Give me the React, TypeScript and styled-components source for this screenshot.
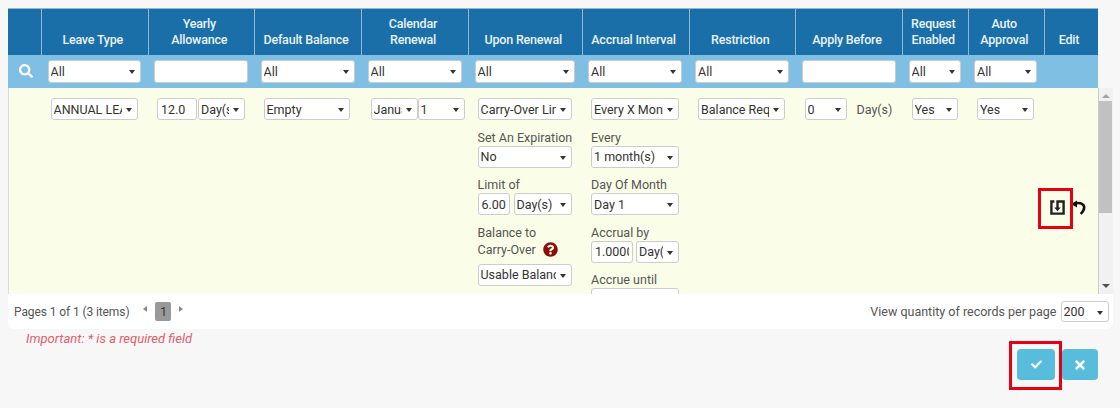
import React, { FC, ReactNode } from 'react';
import styled, { createGlobalStyle } from 'styled-components';
import { FaCheck, FaQuestionCircle, FaSearch, FaTimes } from 'react-icons/fa';

const COLUMNS = '33px 106.5px 106.5px 107px 107px 113.5px 107px 106.5px 107px 65.5px 76.5px 53px';

const GlobalStyle = createGlobalStyle`
    html, body {
        margin: 0;
        padding: 0;
        background: #f7f7f7;
    }
    body {
        font-family: Roboto, "Liberation Sans", sans-serif;
        font-size: 12.5px;
        color: #555;
    }
`;

const Page = styled.div`
    width: 1120px;
    height: 408px;
    padding: 8px 7px 0 8px;
    box-sizing: border-box;
    overflow: hidden;
`;

const Table = styled.div`
    width: 1105px;
`;

const HeaderRow = styled.div`
    display: grid;
    grid-template-columns: ${COLUMNS};
    width: 1089.5px;
    height: 46.5px;
    background: #1a6fa8;
    border-top: 1px solid #8fb9d6;
    box-sizing: border-box;
`;

const HeaderCell = styled.div`
    display: flex;
    align-items: flex-end;
    justify-content: center;
    padding: 0 4px 7px 0;
    border-left: 1px solid #8fb9d6;
    color: #e8f2f8;
    font-size: 12.5px;
    font-weight: 500;
    letter-spacing: -0.2px;
    line-height: 16px;
    text-align: center;
    box-sizing: border-box;
    &:first-child {
        border-left: none;
    }
`;

const FilterRow = styled.div`
    display: grid;
    grid-template-columns: ${COLUMNS};
    width: 1089.5px;
    height: 33.5px;
    background: #7fbfe4;
`;

const FilterCell = styled.div`
    display: flex;
    align-items: center;
    padding: 0 6.5px;
    box-sizing: border-box;
    min-width: 0;
`;

const SearchCell = styled(FilterCell)`
    justify-content: center;
    padding: 0 0 0 2px;
    color: #fff;
    font-size: 14px;
`;

const ScrollArea = styled.div`
    display: flex;
    height: 206px;
`;

const BodyViewport = styled.div`
    width: 1089.5px;
    height: 206px;
    overflow: hidden;
    background: #fafee8;
    border-left: 1px solid #ddd;
    box-sizing: border-box;
`;

const BodyRow = styled.div`
    display: grid;
    grid-template-columns: ${COLUMNS};
    margin-left: -1px;
    min-height: 238px;
`;

const BodyCell = styled.div`
    padding: 10px 0 0 9.5px;
    box-sizing: border-box;
    min-width: 0;
`;

const InlineControls = styled.div<{ $gap?: number }>`
    display: flex;
    align-items: center;
    gap: ${(p) => p.$gap ?? 1}px;
`;

const Field = styled.div`
    margin-top: 8.5px;
`;

const FieldLabel = styled.div`
    line-height: 17px;
    white-space: nowrap;
    color: #555;
`;

const HelpLabel = styled(FieldLabel)`
    margin-bottom: 6px;
`;

const HelpIcon = styled(FaQuestionCircle)`
    color: #8f0a0a;
    font-size: 15px;
    margin-left: 7px;
    vertical-align: -3px;
`;

const SelectWrap = styled.span<{ $w?: number; $h?: number }>`
    position: relative;
    display: inline-block;
    flex: none;
    width: ${(p) => (p.$w ? `${p.$w}px` : '100%')};
    height: ${(p) => p.$h ?? 22}px;
    &::after {
        content: '';
        position: absolute;
        right: 6px;
        top: 50%;
        margin-top: -1px;
        border-left: 3.5px solid transparent;
        border-right: 3.5px solid transparent;
        border-top: 4px solid #333;
        pointer-events: none;
    }
`;

const NativeSelect = styled.select`
    appearance: none;
    display: block;
    width: 100%;
    height: 100%;
    margin: 0;
    padding: 0 15px 0 2px;
    background: #fff;
    border: 1px solid #ccc;
    border-radius: 3px;
    box-sizing: border-box;
    color: #333;
    font: 12.5px Roboto, "Liberation Sans", sans-serif;
    outline: none;
`;

const TextInput = styled.input<{ $w?: number; $h?: number }>`
    flex: none;
    width: ${(p) => (p.$w ? `${p.$w}px` : '100%')};
    height: ${(p) => p.$h ?? 22}px;
    margin: 0;
    padding: 0 3px;
    background: #fff;
    border: 1px solid #ccc;
    border-radius: 3px;
    box-sizing: border-box;
    color: #333;
    font: 12.5px Roboto, "Liberation Sans", sans-serif;
    outline: none;
`;

const Suffix = styled.span`
    margin-left: 10px;
    color: #555;
`;

const EditCell = styled.div`
    display: flex;
    align-items: center;
    justify-content: center;
    gap: 6px;
    padding-right: 6px;
`;

const Annotated = styled.span<{ $box: string }>`
    position: relative;
    display: inline-flex;
    &::after {
        content: '';
        position: absolute;
        inset: ${(p) => p.$box};
        border: 3px solid #e60012;
        pointer-events: none;
    }
`;

const Scrollbar = styled.div`
    display: flex;
    flex-direction: column;
    justify-content: space-between;
    align-items: center;
    width: 15.5px;
    height: 206px;
    background: #f1f1f1;
    border-left: 1px solid #ccc;
    box-sizing: border-box;
    padding: 6px 0 6px;
`;

const ScrollThumb = styled.div`
    width: 13px;
    height: 112px;
    margin-top: 3px;
    margin-bottom: auto;
    background: #c1c1c1;
`;

const ScrollArrow = styled.div<{ $down?: boolean }>`
    border-left: 4px solid transparent;
    border-right: 4px solid transparent;
    ${(p) => (p.$down ? 'border-top: 4px solid #505050;' : 'border-bottom: 4px solid #a3a3a3;')}
`;

const Footer = styled.div`
    display: flex;
    align-items: center;
    justify-content: space-between;
    height: 35px;
    padding: 0 4.5px 0 6px;
    background: #fff;
    border-radius: 0 0 6px 6px;
    box-sizing: border-box;
`;

const Pager = styled.div`
    display: flex;
    align-items: center;
    font-size: 12px;
    letter-spacing: -0.1px;
`;

const PageArrow = styled.span<{ $next?: boolean }>`
    margin: 0 0 5px ${(p) => (p.$next ? '8px' : '14px')};
    border-top: 3.5px solid transparent;
    border-bottom: 3.5px solid transparent;
    ${(p) => (p.$next ? 'border-left: 4px solid #888;' : 'border-right: 4px solid #888;')}
`;

const PageNumber = styled.span`
    display: flex;
    align-items: center;
    justify-content: center;
    width: 16px;
    height: 19px;
    margin-left: 8px;
    background: #999;
    border-radius: 2px;
    color: #333;
`;

const PageSize = styled.div`
    display: flex;
    align-items: center;
    gap: 4px;
    font-size: 12.5px;
`;

const BottomArea = styled.div`
    position: relative;
    height: 70px;
`;

const RequiredNote = styled.div`
    padding: 2px 0 0 18px;
    color: #e0606a;
    font-size: 13px;
    font-style: italic;
    line-height: 16px;
`;

const Actions = styled.div`
    display: flex;
    justify-content: flex-end;
    gap: 7px;
    margin-top: 2px;
    padding-right: 15px;
`;

const ActionButton = styled.button<{ $w: number; $size: number }>`
    display: flex;
    align-items: center;
    justify-content: center;
    width: ${(p) => p.$w}px;
    height: 31px;
    padding: 0;
    background: #58bcdc;
    border: none;
    border-radius: 4px;
    color: #fff;
    font-size: ${(p) => p.$size}px;
`;

const Select: FC<{ w?: number; h?: number; value: string }> = ({ w, h, value }) => (
    <SelectWrap $w={w} $h={h}>
        <NativeSelect defaultValue={value}>
            <option>{value}</option>
        </NativeSelect>
    </SelectWrap>
);

const SaveIcon: FC = () => (
    <svg width="15" height="15" viewBox="0 0 15 15" fill="none" stroke="#222" strokeWidth="2.4">
        <path d="M4.4 1.5H1.4V13.6H13.6V1.5H7.5V8" />
        <path d="M4.3 7.4H10.7L7.5 11.2Z" fill="#222" stroke="none" />
    </svg>
);

const UndoIcon: FC = () => (
    <svg width="15" height="15" viewBox="0 0 15 15" fill="none">
        <path d="M0 4L6 0.4V7.6Z" fill="#111" />
        <path d="M4 3.6C9 2 13.2 3.8 13.2 7.6C13.2 10 11.8 11.8 9.8 14" stroke="#111" strokeWidth="2.6" />
    </svg>
);

const HEADERS: ReactNode[] = [
    '',
    'Leave Type',
    <>Yearly<br />Allowance</>,
    'Default Balance',
    <>Calendar<br />Renewal</>,
    'Upon Renewal',
    'Accrual Interval',
    'Restriction',
    'Apply Before',
    <>Request<br />Enabled</>,
    <>Auto<br />Approval</>,
    'Edit',
];

const App: FC = () => (
    <Page>
        <GlobalStyle />
        <Table>
            <HeaderRow>
                {HEADERS.map((header, i) => (
                    <HeaderCell key={i}>
                        <span>{header}</span>
                    </HeaderCell>
                ))}
            </HeaderRow>
            <FilterRow>
                <SearchCell>
                    <FaSearch />
                </SearchCell>
                <FilterCell><Select h={23} value="All" /></FilterCell>
                <FilterCell><TextInput $h={23} /></FilterCell>
                <FilterCell><Select h={23} value="All" /></FilterCell>
                <FilterCell><Select h={23} value="All" /></FilterCell>
                <FilterCell><Select h={23} value="All" /></FilterCell>
                <FilterCell><Select h={23} value="All" /></FilterCell>
                <FilterCell><Select h={23} value="All" /></FilterCell>
                <FilterCell><TextInput $h={23} /></FilterCell>
                <FilterCell><Select h={23} value="All" /></FilterCell>
                <FilterCell><Select w={63} h={23} value="All" /></FilterCell>
                <FilterCell />
            </FilterRow>
            <ScrollArea>
                <BodyViewport>
                    <BodyRow>
                        <div />
                        <BodyCell><Select w={87} value="ANNUAL LEAVE" /></BodyCell>
                        <BodyCell>
                            <InlineControls>
                                <TextInput $w={40} defaultValue="12.0" />
                                <Select w={47} value="Day(s)" />
                            </InlineControls>
                        </BodyCell>
                        <BodyCell><Select w={86} value="Empty" /></BodyCell>
                        <BodyCell>
                            <InlineControls $gap={0}>
                                <Select w={47} value="January" />
                                <Select w={47} value="1" />
                            </InlineControls>
                        </BodyCell>
                        <BodyCell>
                            <Select w={94} value="Carry-Over Limit" />
                            <Field>
                                <FieldLabel>Set An Expiration</FieldLabel>
                                <Select w={94} value="No" />
                            </Field>
                            <Field>
                                <FieldLabel>Limit of</FieldLabel>
                                <InlineControls $gap={4}>
                                    <TextInput $w={32} defaultValue="6.00" />
                                    <Select w={58} value="Day(s)" />
                                </InlineControls>
                            </Field>
                            <Field>
                                <FieldLabel>Balance to</FieldLabel>
                                <HelpLabel>Carry-Over<HelpIcon /></HelpLabel>
                                <Select w={94} value="Usable Balance" />
                            </Field>
                        </BodyCell>
                        <BodyCell>
                            <Select w={88} value="Every X Months" />
                            <Field>
                                <FieldLabel>Every</FieldLabel>
                                <Select w={88} value="1 month(s)" />
                            </Field>
                            <Field>
                                <FieldLabel>Day Of Month</FieldLabel>
                                <Select w={88} value="Day 1" />
                            </Field>
                            <Field>
                                <FieldLabel>Accrual by</FieldLabel>
                                <InlineControls $gap={3}>
                                    <TextInput $w={42} defaultValue="1.0000" />
                                    <Select w={43} value="Day(s)" />
                                </InlineControls>
                            </Field>
                            <Field>
                                <FieldLabel>Accrue until</FieldLabel>
                                <Select w={88} value="" />
                            </Field>
                        </BodyCell>
                        <BodyCell><Select w={87} value="Balance Required" /></BodyCell>
                        <BodyCell>
                            <InlineControls $gap={0}>
                                <Select w={42} value="0" />
                                <Suffix>Day(s)</Suffix>
                            </InlineControls>
                        </BodyCell>
                        <BodyCell><Select w={46} value="Yes" /></BodyCell>
                        <BodyCell><Select w={57} value="Yes" /></BodyCell>
                        <EditCell>
                            <Annotated $box="-12px -8px -14px -12px">
                                <SaveIcon />
                            </Annotated>
                            <UndoIcon />
                        </EditCell>
                    </BodyRow>
                </BodyViewport>
                <Scrollbar>
                    <ScrollArrow />
                    <ScrollThumb />
                    <ScrollArrow $down />
                </Scrollbar>
            </ScrollArea>
            <Footer>
                <Pager>
                    Pages 1 of 1 (3 items)
                    <PageArrow />
                    <PageNumber>1</PageNumber>
                    <PageArrow $next />
                </Pager>
                <PageSize>
                    View quantity of records per page
                    <Select w={48} h={21} value="200" />
                </PageSize>
            </Footer>
            <BottomArea>
                <RequiredNote>Important: * is a required field</RequiredNote>
                <Actions>
                    <Annotated $box="-8px -7px -10px -8px">
                        <ActionButton $w={38} $size={11}><FaCheck /></ActionButton>
                    </Annotated>
                    <ActionButton $w={36} $size={14}><FaTimes /></ActionButton>
                </Actions>
            </BottomArea>
        </Table>
    </Page>
);

export default App;
